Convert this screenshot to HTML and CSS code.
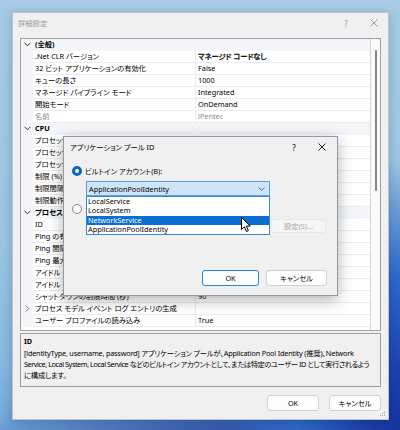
FILE: index.html
```html
<!DOCTYPE html>
<html lang="ja">
<head>
    <meta charset="UTF-8">
    <meta name="viewport" content="width=device-width, initial-scale=1.0">
    <title>詳細設定</title>
    <link rel="stylesheet" href="styles.css">
</head>
<body>
    <!-- Ventana de configuración avanzada -->
    <div class="window">
        <div class="titlebar">
            <span class="title">詳細設定</span>
            <span class="cap-btn">?</span>
            <span class="cap-btn"><svg width="8" height="8" viewBox="0 0 8 8"><path d="M0.5 0.5L7.5 7.5M7.5 0.5L0.5 7.5" stroke="#9c9c9c" stroke-width="1"/></svg></span>
        </div>
        <div class="content">
            <div class="grid">
                <div class="rows">
                    <div class="row cat"><span class="gutter"><svg width="7" height="5" viewBox="0 0 7 5"><path d="M0.5 0.8L3.5 3.8L6.5 0.8" fill="none" stroke="#333" stroke-width="1"/></svg></span><span class="name">(全般)</span></div>
                    <div class="row"><span class="gutter"></span><span class="name">.Net CLR バージョン</span><span class="value strong">マネージド コードなし</span></div>
                    <div class="row"><span class="gutter"></span><span class="name">32 ビット アプリケーションの有効化</span><span class="value">False</span></div>
                    <div class="row"><span class="gutter"></span><span class="name">キューの長さ</span><span class="value">1000</span></div>
                    <div class="row"><span class="gutter"></span><span class="name">マネージド パイプライン モード</span><span class="value">Integrated</span></div>
                    <div class="row"><span class="gutter"></span><span class="name">開始モード</span><span class="value">OnDemand</span></div>
                    <div class="row readonly"><span class="gutter"></span><span class="name">名前</span><span class="value">iPentec</span></div>
                    <div class="row cat"><span class="gutter"><svg width="7" height="5" viewBox="0 0 7 5"><path d="M0.5 0.8L3.5 3.8L6.5 0.8" fill="none" stroke="#333" stroke-width="1"/></svg></span><span class="name">CPU</span></div>
                    <div class="row"><span class="gutter"></span><span class="name">プロセッサ アフィニティ マスク</span><span class="value">4294967295</span></div>
                    <div class="row"><span class="gutter"></span><span class="name">プロセッサ アフィニティ マスク (64 ビット オプション)</span><span class="value">4294967295</span></div>
                    <div class="row"><span class="gutter"></span><span class="name">プロセッサ アフィニティが有効</span><span class="value">False</span></div>
                    <div class="row"><span class="gutter"></span><span class="name">制限 (%)</span><span class="value">0</span></div>
                    <div class="row"><span class="gutter"></span><span class="name">制限間隔 (分)</span><span class="value">5</span></div>
                    <div class="row"><span class="gutter"></span><span class="name">制限動作</span><span class="value">NoAction</span></div>
                    <div class="row cat"><span class="gutter"><svg width="7" height="5" viewBox="0 0 7 5"><path d="M0.5 0.8L3.5 3.8L6.5 0.8" fill="none" stroke="#333" stroke-width="1"/></svg></span><span class="name">プロセス モデル</span></div>
                    <div class="row"><span class="gutter"></span><span class="name">ID</span><span class="value">ApplicationPoolIdentity</span></div>
                    <div class="row"><span class="gutter"></span><span class="name">Ping の有効化</span><span class="value">True</span></div>
                    <div class="row"><span class="gutter"></span><span class="name">Ping 間隔 (秒)</span><span class="value">30</span></div>
                    <div class="row"><span class="gutter"></span><span class="name">Ping 最大応答時間 (秒)</span><span class="value">90</span></div>
                    <div class="row"><span class="gutter"></span><span class="name">アイドル タイムアウト (分)</span><span class="value">20</span></div>
                    <div class="row"><span class="gutter"></span><span class="name">アイドル タイムアウト操作</span><span class="value">Terminate</span></div>
                    <div class="row"><span class="gutter"></span><span class="name">シャットダウンの制限時間 (秒)</span><span class="value">90</span></div>
                    <div class="row"><span class="gutter"><svg width="5" height="7" viewBox="0 0 5 7"><path d="M0.8 0.5L3.8 3.5L0.8 6.5" fill="none" stroke="#777" stroke-width="1"/></svg></span><span class="name">プロセス モデル イベント ログ エントリの生成</span><span class="value"></span></div>
                    <div class="row"><span class="gutter"></span><span class="name">ユーザー プロファイルの読み込み</span><span class="value">True</span></div>
                </div>
                <div class="vscroll"><div class="thumb"></div></div>
            </div>

            <!-- Descripción de la propiedad seleccionada -->
            <div class="desc">
                <div class="desc-title">ID</div>
                <div class="desc-line">[identityType, username, password] アプリケーション プールが、Application Pool Identity (推奨)、Network</div>
                <div class="desc-line tight">Service, Local System, Local Service などのビルトイン アカウントとして、または特定のユーザー ID として実行されるよう</div>
                <div class="desc-line">に構成します。</div>
            </div>

            <div class="buttons">
                <button class="btn">OK</button>
                <button class="btn">キャンセル</button>
            </div>
        </div>
        <svg class="grip" width="6" height="6" viewBox="0 0 6 6"><rect x="4" y="0" width="1" height="1" fill="#aaa"/><rect x="2" y="2" width="1" height="1" fill="#aaa"/><rect x="4" y="2" width="1" height="1" fill="#aaa"/><rect x="0" y="4" width="1" height="1" fill="#aaa"/><rect x="2" y="4" width="1" height="1" fill="#aaa"/><rect x="4" y="4" width="1" height="1" fill="#aaa"/></svg>
    </div>

    <!-- Diálogo de identidad del grupo de aplicaciones -->
    <div class="dialog">
        <div class="dlg-titlebar">
            <span class="title">アプリケーション プール ID</span>
            <span class="cap-btn">?</span>
            <span class="cap-btn"><svg width="8" height="8" viewBox="0 0 8 8"><path d="M0.5 0.5L7.5 7.5M7.5 0.5L0.5 7.5" stroke="#222" stroke-width="1"/></svg></span>
        </div>
        <div class="dlg-body">
            <div class="radio-row"><span class="radio on"></span><span>ビルトイン アカウント(B):</span></div>
            <div class="combo">
                <span>ApplicationPoolIdentity</span>
                <svg width="7" height="4" viewBox="0 0 7 4"><path d="M0.5 0.5L3.5 3.3L6.5 0.5" fill="none" stroke="#555" stroke-width="0.9"/></svg>
            </div>
            <div class="radio-row second"><span class="radio"></span><span>カスタム アカウント(C):</span></div>
            <div class="custom-row">
                <span class="textbox"></span>
                <button class="btn disabled">設定(S)...</button>
            </div>
            <div class="dlg-buttons">
                <button class="btn default">OK</button>
                <button class="btn">キャンセル</button>
            </div>
        </div>
        <ul class="dropdown">
            <li>LocalService</li>
            <li>LocalSystem</li>
            <li class="selected">NetworkService</li>
            <li>ApplicationPoolIdentity</li>
        </ul>
    </div>

    <svg class="cursor" width="11" height="16" viewBox="0 0 11 16"><path d="M0.5 0.5L0.5 12.5L3.4 9.8L5.4 14.5L7.3 13.7L5.4 9.1L9.3 9.1Z" fill="#fff" stroke="#000" stroke-width="1" stroke-linejoin="round"/></svg>
</body>
</html>
```

FILE: styles.css
```css
* {
    box-sizing: border-box;
}
body {
    margin: 0;
    width: 400px;
    height: 430px;
    overflow: hidden;
    position: relative;
    font-family: "Noto Sans", "Noto Sans CJK JP", sans-serif;
    font-size: 7.3px;
    font-feature-settings: "palt";
    color: #000;
    /* Fondo del escritorio */
    background:
        radial-gradient(ellipse 240px 320px at 450px 470px, #0c2180 0%, #1a3ea8 35%, #2f6acb 65%, rgba(80, 140, 215, 0) 100%),
        radial-gradient(ellipse 300px 70px at 270px 445px, #1c3a9c 0%, rgba(40, 80, 180, 0) 100%),
        linear-gradient(180deg, #a6cbe4 0%, #9cc5e3 55%, #86b8e0 85%, #6ea6da 100%);
}
button {
    font-family: inherit;
    font-size: inherit;
    font-feature-settings: inherit;
    color: inherit;
}
.window {
    margin: 12px 0 0 12px;
    width: 377px;
    height: 408px;
    background: #f0f0f0;
    border: 1px solid #b8c4d0;
    box-shadow: 0 2px 10px rgba(0, 0, 0, 0.2);
    display: flex;
    flex-direction: column;
    position: relative;
}
.titlebar {
    height: 20px;
    display: flex;
    align-items: center;
    padding-left: 5px;
    color: #9c9c9c;
    flex: none;
}
.titlebar .title {
    flex: 1;
}
.cap-btn {
    width: 28px;
    height: 100%;
    display: flex;
    align-items: center;
    justify-content: center;
    font-size: 8px;
}
.content {
    flex: 1;
    display: flex;
    flex-direction: column;
    padding: 5px 7px 0 7px;
}
/* Cuadrícula de propiedades */
.grid {
    height: 293px;
    border: 1px solid #a0a0a0;
    background: #fff;
    display: flex;
    overflow: hidden;
}
.rows {
    width: 349px;
    flex: none;
}
.row {
    display: flex;
    height: 12px;
    line-height: 11px;
    white-space: nowrap;
}
.gutter {
    width: 12px;
    flex: none;
    background: #f3f5f8;
    display: flex;
    align-items: center;
    justify-content: center;
    padding-bottom: 1px;
}
.name {
    width: 163px;
    flex: none;
    padding-left: 2px;
    border-right: 1px solid #ebebeb;
    border-bottom: 1px solid #ebebeb;
    overflow: hidden;
}
.value {
    flex: 1;
    padding-left: 2px;
    border-bottom: 1px solid #ebebeb;
    overflow: hidden;
}
/* valor modificado: trazo extra en lugar de la cara negrita */
.strong {
    -webkit-text-stroke: 0.3px #000;
}
.cat .name {
    font-weight: bold;
}
.readonly .name,
.readonly .value {
    color: #8c8c8c;
}
.cat {
    background: #f3f5f8;
}
.cat .name {
    flex: 1;
    width: auto;
    border: none;
}
.vscroll {
    flex: 1;
    border-left: 1px solid #d6d6d6;
    background: #fafafa;
    padding-top: 11px;
    display: flex;
    justify-content: center;
}
.thumb {
    width: 2px;
    height: 141px;
    border-radius: 1px;
    background: #858585;
}
/* Panel de descripción */
.desc {
    margin-top: 2px;
    height: 54px;
    border: 1px solid #a0a0a0;
    padding: 2px 3px;
    line-height: 11px;
    white-space: nowrap;
    overflow: hidden;
}
.desc-title {
    font-weight: bold;
    margin-bottom: 1px;
}
.desc-line {
    letter-spacing: -0.2px;
}
.desc-line.tight {
    letter-spacing: -0.45px;
}
.buttons {
    margin-top: 8px;
    display: flex;
    justify-content: flex-end;
    gap: 10px;
}
.btn {
    height: 16px;
    width: 52px;
    padding: 0;
    background: #fdfdfd;
    border: 1px solid #d2d2d2;
    border-radius: 3px;
    line-height: 14px;
}
.grip {
    position: absolute;
    right: 2px;
    bottom: 2px;
}
/* Diálogo modal */
.dialog {
    position: absolute;
    left: 63px;
    top: 136px;
    width: 275px;
    height: 160px;
    background: #f0f0f0;
    border: 1px solid #8f9aa5;
    box-shadow: 0 4px 14px rgba(0, 0, 0, 0.3);
    display: flex;
    flex-direction: column;
}
.dlg-titlebar {
    height: 20px;
    display: flex;
    align-items: center;
    padding-left: 6px;
    padding-right: 1px;
    flex: none;
}
.dlg-titlebar .title {
    flex: 1;
}
.dlg-body {
    flex: 1;
    display: flex;
    flex-direction: column;
    padding: 8px 10px 9px 8px;
}
.radio-row {
    height: 12px;
    display: flex;
    align-items: center;
    gap: 3px;
    white-space: nowrap;
}
.radio-row.second {
    margin-top: 7px;
}
.radio {
    width: 10px;
    height: 10px;
    border-radius: 50%;
    border: 1px solid #858585;
    background: #f9f9f9;
    flex: none;
}
.radio.on {
    border: 3px solid #0a64c2;
    background: #fff;
}
.combo {
    margin: 4px 0 0 14px;
    width: 184px;
    height: 15px;
    background: #cfe4f7;
    border: 1px solid #5a9fe0;
    display: flex;
    align-items: center;
    justify-content: space-between;
    padding: 0 4px 0 2px;
}
.custom-row {
    margin: 4px 0 0 14px;
    display: flex;
    gap: 1px;
    height: 14px;
}
.textbox {
    width: 184px;
    background: #fff;
    border: 1px solid #ccc;
}
.btn.disabled {
    width: 55px;
    height: 14px;
    line-height: 12px;
    background: #f5f5f5;
    border-color: #e6e6e6;
    color: #a8a8a8;
}
.dlg-buttons {
    margin-top: auto;
    display: flex;
    justify-content: flex-end;
    gap: 7px;
}
.dlg-buttons .btn {
    width: 57px;
}
.dlg-buttons .btn + .btn {
    width: 61px;
}
.btn.default {
    border-color: #2a7fd6;
}
.dropdown {
    position: absolute;
    left: 22px;
    top: 59px;
    width: 184px;
    height: 39px;
    margin: 0;
    padding: 0;
    list-style: none;
    background: #fff;
    border: 1px solid #3b86d6;
}
.dropdown li {
    height: 9.25px;
    line-height: 9.25px;
    padding-left: 1px;
}
.dropdown li.selected {
    background: #0a6fd0;
    color: #fff;
}
.cursor {
    position: absolute;
    left: 241px;
    top: 217px;
}
```
